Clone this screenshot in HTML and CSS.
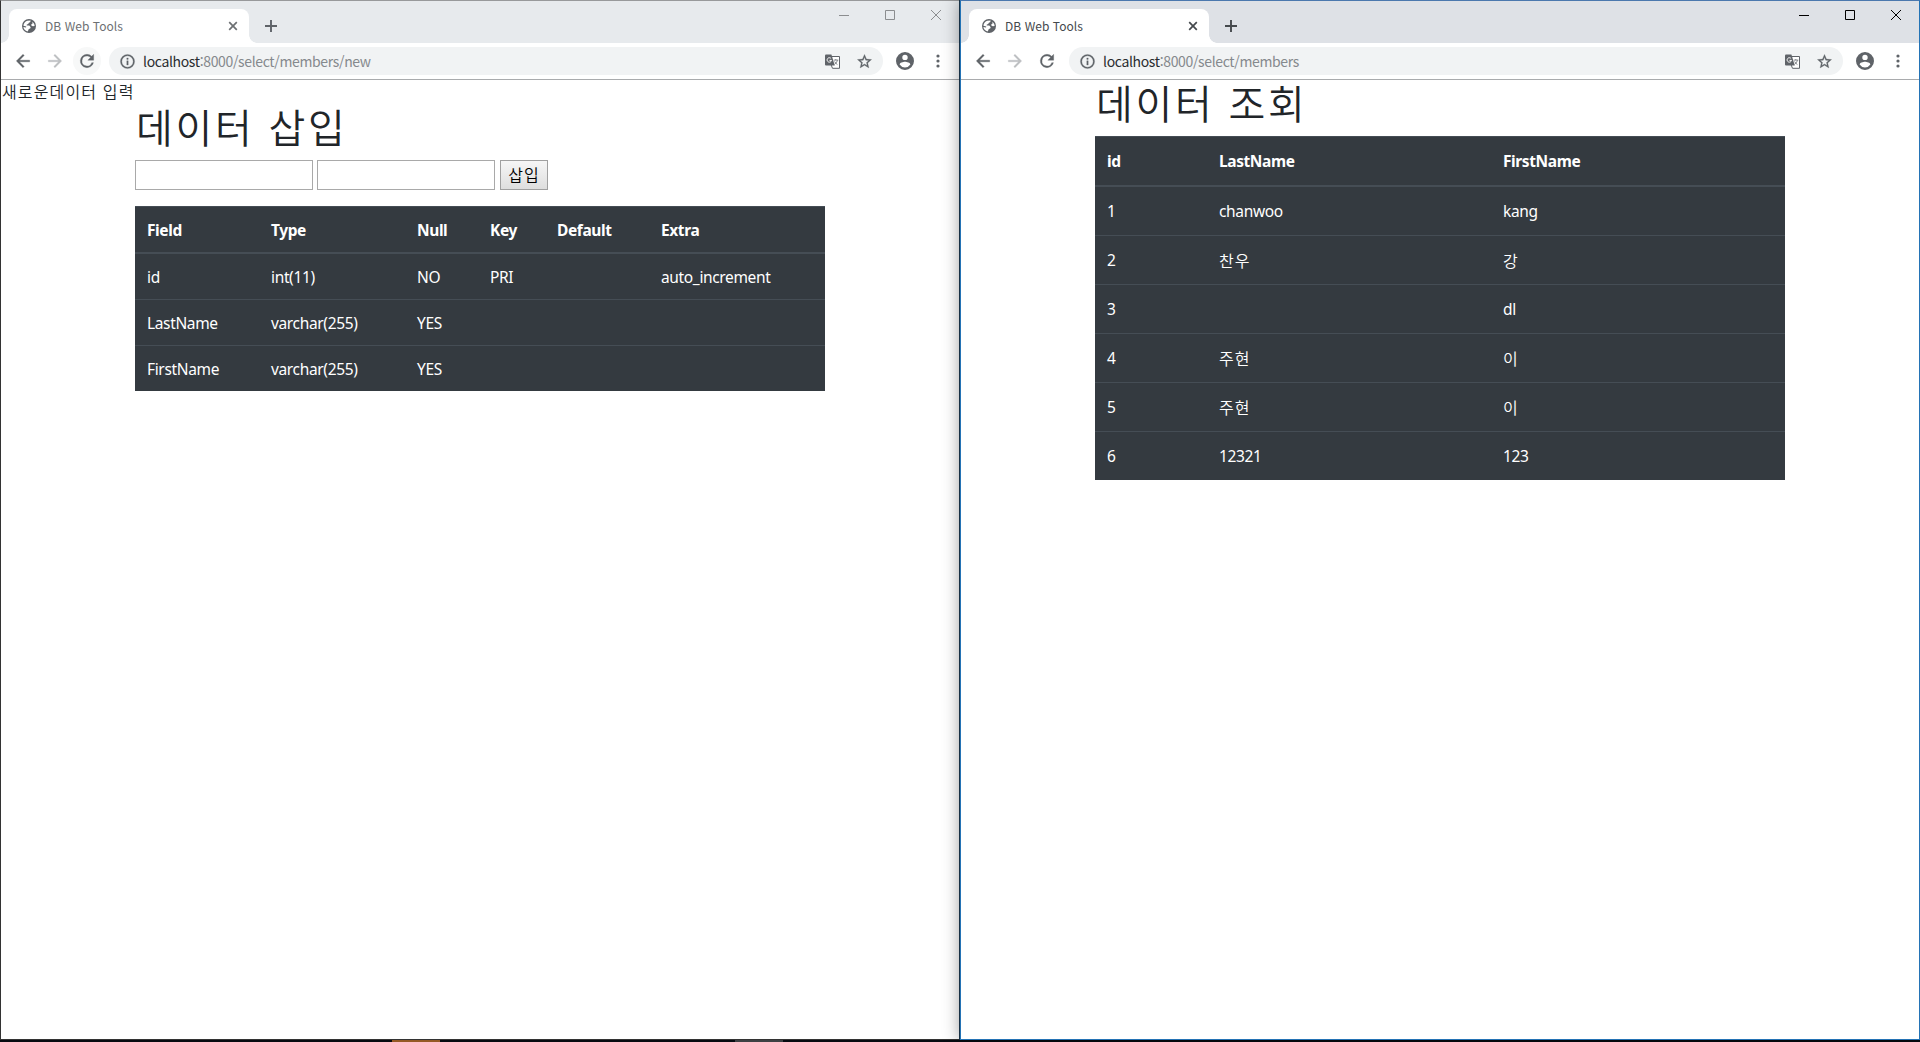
FILE: index.html
```html
<!DOCTYPE html>
<html lang="ko">
<head>
<meta charset="utf-8">
<title>DB Web Tools</title>
<link rel="stylesheet" href="styles.css">
</head>
<body>
<svg width="0" height="0" class="sprite" aria-hidden="true">
  <symbol id="globe" viewBox="0 0 14 14"><circle cx="7" cy="7" r="7" fill="#5f6368"/><path d="M1.4 6.8C1.5 4.4 3 2.4 5.2 1.7L8.6 1.6 8.3 3.1 6.6 3.9 6.3 5.1 4.8 5.5 4.7 6.5 7.3 6.6 8.7 8.2 8.2 9.5 6.8 9.9 6.3 11.2 5.6 12.4C3.2 11.8 1.6 9.8 1.4 7.9L4 8.6 4.3 7.6Z" fill="#fff"/><path d="M10.3 2.7C11.8 3.8 12.6 5.3 12.6 7L10.8 7.3 9.3 6.6 9.2 5.4 10.6 4.6Z" fill="#fff"/></symbol>
  <symbol id="close" viewBox="0 0 10 10"><path d="m1.2 1.2 7.6 7.6m0-7.6L1.2 8.8" fill="none" stroke="currentColor" stroke-width="1.7"/></symbol>
  <symbol id="plus" viewBox="0 0 12 12"><path d="M6 0v12M0 6h12" stroke="currentColor" stroke-width="1.9"/></symbol>
  <symbol id="arrow" viewBox="0 0 24 24"><path d="M20 11H7.83l5.59-5.59L12 4l-8 8 8 8 1.41-1.41L7.83 13H20v-2z" fill="currentColor" stroke="currentColor" stroke-width=".4"/></symbol>
  <symbol id="reload" viewBox="0 0 24 24"><path d="M17.65 6.35A7.96 7.96 0 0 0 12 4a8 8 0 1 0 7.73 10h-2.08A6 6 0 1 1 12 6c1.66 0 3.14.69 4.22 1.78L13 11h7V4l-2.35 2.35z" fill="currentColor" stroke="currentColor" stroke-width=".4"/></symbol>
  <symbol id="info" viewBox="0 0 24 24"><path d="M11 17h2v-6h-2v6zm1-15a10 10 0 1 0 0 20 10 10 0 0 0 0-20zm0 18a8 8 0 1 1 0-16 8 8 0 0 1 0 16zM11 9h2V7h-2v2z" fill="currentColor" stroke="currentColor" stroke-width=".4"/></symbol>
  <symbol id="translate" viewBox="0 0 15 15"><path d="M6 2.5h8.5v11.8H7.5L6.2 11" fill="#fff" stroke="#5f6368"/><path d="M0 1.5Q0 .5 1 .5h5.4l3.4 11H1q-1 0-1-1z" fill="#5f6368"/><path d="M6.1 4.6A2.2 2.2 0 1 0 6.5 6.4H4.5" fill="none" stroke="#fff"/><path d="M8.7 6.1h4.6M10.8 5v1.1M12.5 6.3q-.6 2.5-3 4M9.6 7.5q1 2 2.8 3" fill="none" stroke="#777b80" stroke-width=".9"/></symbol>
  <symbol id="star" viewBox="0 0 24 24"><path d="m22 9.24-7.19-.62L12 2 9.19 8.63 2 9.24l5.46 4.73L5.82 21 12 17.27 18.18 21l-1.63-7.03L22 9.24zM12 15.4l-3.76 2.27 1-4.28-3.32-2.88 4.38-.38L12 6.1l1.71 4.04 4.38.38-3.32 2.88 1 4.28L12 15.4z" fill="currentColor" stroke="currentColor" stroke-width=".4"/></symbol>
  <symbol id="user" viewBox="2 2 20 20"><path d="M12 2a10 10 0 1 0 0 20 10 10 0 0 0 0-20zm0 3a3 3 0 1 1 0 6 3 3 0 0 1 0-6zm0 14.2a7.2 7.2 0 0 1-6-3.22c.03-1.99 4-3.08 6-3.08 1.99 0 5.97 1.09 6 3.08a7.2 7.2 0 0 1-6 3.22z" fill="currentColor"/></symbol>
  <symbol id="dots" viewBox="0 0 4 14"><circle cx="2" cy="2" r="1.6"/><circle cx="2" cy="7" r="1.6"/><circle cx="2" cy="12" r="1.6"/></symbol>
  <symbol id="win-min" viewBox="0 0 10 10"><path d="M0 5.5h10" stroke="currentColor"/></symbol>
  <symbol id="win-max" viewBox="0 0 10 10"><path d="M.5.5h9v9h-9z" fill="none" stroke="currentColor"/></symbol>
  <symbol id="win-close" viewBox="0 0 10 10"><path d="m0 0 10 10M10 0 0 10" stroke="currentColor"/></symbol>
</svg>
<main class="desktop">
  <section class="window inactive">
    <header class="tabstrip">
      <div class="tab"><svg class="globe"><use href="#globe"/></svg><span class="tab-title">DB Web Tools</span><svg class="tab-close"><use href="#close"/></svg></div>
      <svg class="new-tab"><use href="#plus"/></svg>
      <div class="controls"><svg><use href="#win-min"/></svg><svg><use href="#win-max"/></svg><svg><use href="#win-close"/></svg></div>
    </header>
    <nav class="toolbar">
      <span class="nav-btn"><svg><use href="#arrow"/></svg></span>
      <span class="nav-btn forward"><svg><use href="#arrow"/></svg></span>
      <span class="nav-btn reload"><svg><use href="#reload"/></svg></span>
      <div class="omnibox"><svg class="info"><use href="#info"/></svg><span class="url"><b>localhost</b>:8000/select/members/new</span><svg class="translate"><use href="#translate"/></svg><svg class="star"><use href="#star"/></svg></div>
      <svg class="user"><use href="#user"/></svg>
      <svg class="dots"><use href="#dots"/></svg>
    </nav>
    <div class="page">
      <p class="notice">새로운데이터 입력</p>
      <div class="container">
        <h1>데이터 삽입</h1>
        <form class="insert"><input type="text"><input type="text"><button type="button">삽입</button></form>
        <table class="fields">
          <colgroup><col class="c-field"><col class="c-type"><col class="c-null"><col class="c-key"><col class="c-default"><col></colgroup>
          <thead><tr><th>Field</th><th>Type</th><th>Null</th><th>Key</th><th>Default</th><th>Extra</th></tr></thead>
          <tbody>
            <tr><td>id</td><td>int(11)</td><td>NO</td><td>PRI</td><td></td><td>auto_increment</td></tr>
            <tr><td>LastName</td><td>varchar(255)</td><td>YES</td><td></td><td></td><td></td></tr>
            <tr><td>FirstName</td><td>varchar(255)</td><td>YES</td><td></td><td></td><td></td></tr>
          </tbody>
        </table>
      </div>
    </div>
  </section>
  <section class="window active">
    <header class="tabstrip">
      <div class="tab"><svg class="globe"><use href="#globe"/></svg><span class="tab-title">DB Web Tools</span><svg class="tab-close"><use href="#close"/></svg></div>
      <svg class="new-tab"><use href="#plus"/></svg>
      <div class="controls"><svg><use href="#win-min"/></svg><svg><use href="#win-max"/></svg><svg><use href="#win-close"/></svg></div>
    </header>
    <nav class="toolbar">
      <span class="nav-btn"><svg><use href="#arrow"/></svg></span>
      <span class="nav-btn forward"><svg><use href="#arrow"/></svg></span>
      <span class="nav-btn"><svg><use href="#reload"/></svg></span>
      <div class="omnibox"><svg class="info"><use href="#info"/></svg><span class="url"><b>localhost</b>:8000/select/members</span><svg class="translate"><use href="#translate"/></svg><svg class="star"><use href="#star"/></svg></div>
      <svg class="user"><use href="#user"/></svg>
      <svg class="dots"><use href="#dots"/></svg>
    </nav>
    <div class="page">
      <div class="container">
        <h1>데이터 조회</h1>
        <table class="members">
          <colgroup><col class="c-id"><col class="c-last"><col></colgroup>
          <thead><tr><th>id</th><th>LastName</th><th>FirstName</th></tr></thead>
          <tbody>
            <tr><td>1</td><td>chanwoo</td><td>kang</td></tr>
            <tr><td>2</td><td class="hangul">찬우</td><td class="hangul">강</td></tr>
            <tr><td>3</td><td></td><td>dl</td></tr>
            <tr><td>4</td><td class="hangul">주현</td><td class="hangul">이</td></tr>
            <tr><td>5</td><td class="hangul">주현</td><td class="hangul">이</td></tr>
            <tr><td>6</td><td>12321</td><td>123</td></tr>
          </tbody>
        </table>
      </div>
    </div>
  </section>
</main>
<footer class="taskbar"><i class="alert"></i><i class="running"></i></footer>
</body>
</html>
```
FILE: styles.css
```css
* { box-sizing: border-box; }
body {
  margin: 0;
  height: 1042px;
  overflow: hidden;
  background: #fff;
  color: #212529;
  font-family: "Noto Sans", "Noto Sans CJK KR", sans-serif;
  font-size: 15.5px;
}
svg { display: block; flex: none; }
.sprite { display: none; }
.desktop { display: grid; grid-template-columns: 960px 960px; height: 1040px; }
.window { border: 1px solid #333; border-top-color: #98999b; background: #fff; }
.window.active {
  position: relative;
  border-color: #2473b5;
  border-top-color: #4b78ae;
  box-shadow: -1px 0 0 #173044, 0 0 16px rgba(0, 0, 0, .4);
}

.tabstrip { display: flex; height: 42px; padding: 8px 18px 0 8px; background: #e7eaed; }
.active .tabstrip { background: #dee1e6; }
.tab {
  position: relative;
  display: flex;
  align-items: center;
  width: 240px;
  height: 34px;
  padding: 0 11px 0 13px;
  border-radius: 8px 8px 0 0;
  background: #fff;
  color: #6d7073;
}
.tab::before, .tab::after { content: ""; position: absolute; bottom: 0; width: 8px; height: 8px; }
.tab::before { left: -8px; background: radial-gradient(circle at 0 0, transparent 7.5px, #fff 8px); }
.tab::after { right: -8px; background: radial-gradient(circle at 100% 0, transparent 7.5px, #fff 8px); }
.globe { width: 14px; height: 14px; }
.tab-title { flex: 1; padding: 0 0 2px 9px; font: 12px "Noto Sans CJK KR", sans-serif; white-space: nowrap; letter-spacing: .05px; }
.tab-close { width: 10px; height: 10px; }
.active .tab, .active .new-tab { color: #45494d; }
.new-tab { width: 12px; height: 12px; margin: 11px 0 0 16px; color: #5f6368; }
.controls { display: flex; gap: 36px; margin-left: auto; padding-top: 1px; color: #8b8d8f; }
.controls svg { width: 10px; height: 10px; }
.active .controls { color: #000; }

.toolbar { display: flex; align-items: center; height: 37px; padding: 0 19px 0 8px; border-bottom: 1px solid #a9abad; color: #5f6368; }
.nav-btn { display: grid; place-items: center; width: 28px; height: 28px; margin-right: 4px; border-radius: 50%; }
.nav-btn svg { width: 20px; height: 20px; }
.forward svg { transform: scaleX(-1); color: #bdbfc1; }
.reload { background: #f7f8f8; }
.omnibox { display: flex; align-items: center; width: 774px; height: 28px; margin-left: 4px; padding: 0 10px; border-radius: 14px; background: #f1f3f4; }
.info { width: 17px; height: 17px; }
.url { flex: 1; margin-left: 7px; padding-bottom: 1px; font: 14px "Noto Sans CJK KR", sans-serif; letter-spacing: -.35px; color: #85898d; white-space: nowrap; }
.url b { font-weight: 400; color: #292c2f; }
.translate { width: 15px; height: 15px; margin-right: 16px; }
.star { width: 17px; height: 17px; }
.user { width: 18px; height: 18px; margin-left: 13px; }
.dots { width: 4px; height: 14px; margin-left: auto; fill: #5f6368; }

.notice { height: 24px; margin: 0; padding-left: 1px; font: 350 16px/22px "Noto Sans CJK KR", sans-serif; letter-spacing: 1.15px; }
.container { width: 690px; margin: 0 auto; }
h1 { height: 48px; margin: 0 0 8px; padding-left: 1px; font: 350 40px/45px "Noto Sans CJK KR", sans-serif; letter-spacing: 2.7px; }
.insert { display: flex; gap: 4px; height: 30px; margin-bottom: 16px; }
.insert input { width: 178px; height: 30px; border: 1px solid #a9a9a9; background: #fff; }
.insert button {
  width: 48px;
  height: 30px;
  margin-left: 1px;
  padding: 0 0 2px;
  border: 1px solid #a0a0a0;
  background: linear-gradient(#f6f6f6, #dedede);
  color: #000;
  font: 350 16px/24px "Noto Sans CJK KR", sans-serif;
  letter-spacing: 1px;
}

table { width: 690px; table-layout: fixed; border-spacing: 0; background: #343a40; color: #fff; line-height: 20px; }
th, td { padding: 0 12px; text-align: left; white-space: nowrap; }
th { border-top: 1px solid #454d55; border-bottom: 2px solid #454d55; font-weight: 700; letter-spacing: -.4px; }
td { border-top: 1px solid #454d55; letter-spacing: -.35px; }
td.hangul { padding-bottom: 1px; font: 350 16px/20px "Noto Sans CJK KR", sans-serif; letter-spacing: 1px; }
tbody tr:first-child td { border-top: 0; }
.fields th { height: 48px; }
.fields td { height: 46px; }
.fields tr:first-child td { height: 45px; }
.members th { height: 51px; }
.members td { height: 49px; }
.members tr:first-child td { height: 48px; }
.c-field { width: 124px; }
.c-type { width: 146px; }
.c-null { width: 73px; }
.c-key { width: 67px; }
.c-default { width: 104px; }
.c-id { width: 112px; }
.c-last { width: 284px; }

.taskbar { display: flex; gap: 295px; height: 2px; padding-left: 392px; background: #060a10; }
.taskbar i { width: 48px; height: 2px; }
.alert { background: #955a25; }
.running { background: #3e4144; }
```
